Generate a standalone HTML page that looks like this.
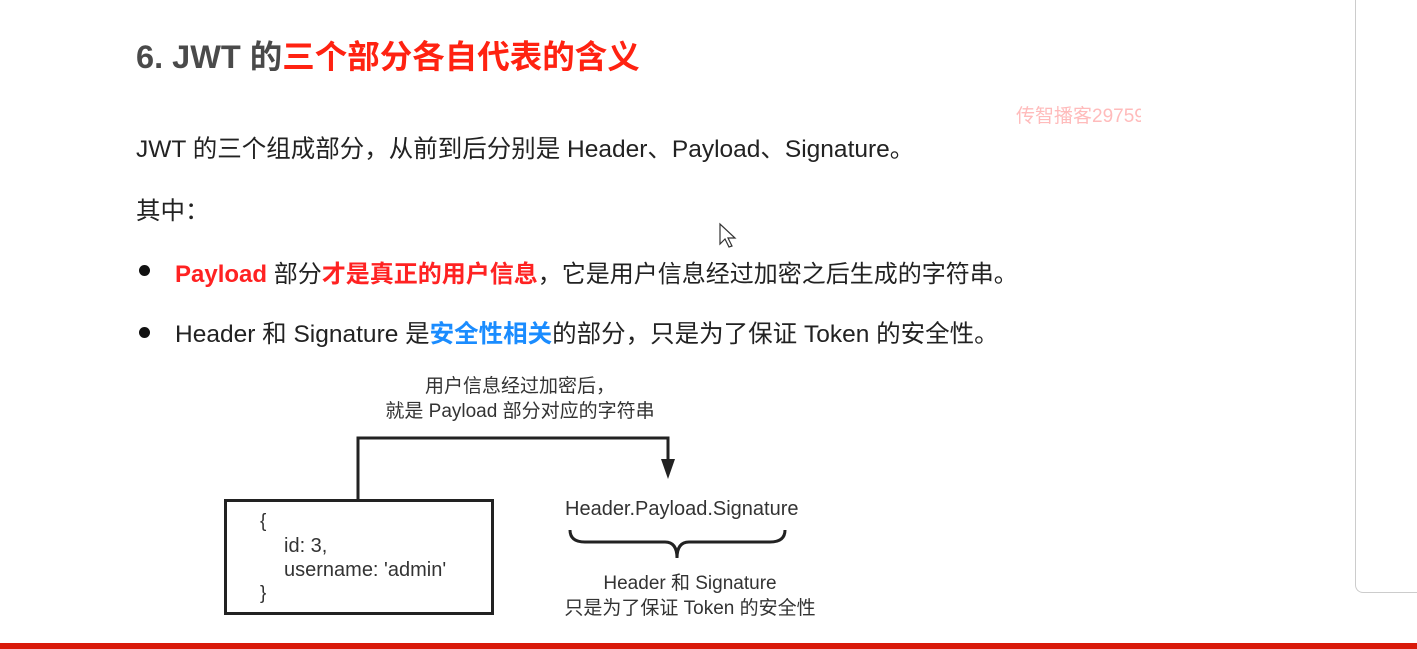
<!DOCTYPE html>
<html><head><meta charset="utf-8"><style>
body{margin:0;width:1417px;height:649px;background:#fff;position:relative;overflow:hidden;font-family:"Liberation Sans","Noto Sans CJK SC",sans-serif;}
.a{position:absolute;white-space:nowrap;}
.t{font-size:24.5px;color:#222;}
.r{color:#f22;font-weight:bold}
.b{color:#1a8cff;font-weight:bold}
.dot{position:absolute;width:11px;height:11px;border-radius:50%;background:#111;}
.d{font-size:19px;color:#333;}
</style></head><body>
<div class="a" style="left:136px;top:31px;font-size:32.5px;font-weight:bold;color:#4a4a4a;">6. JWT 的<span style="color:#f21">三个部分各自代表的含义</span></div>
<div class="a" style="left:1016px;top:101px;font-size:19px;color:#fbb;">传智播客2975<span style="display:inline-block;width:7px;overflow:hidden;vertical-align:bottom">9</span></div>
<div class="a t" style="left:136px;top:130px;">JWT 的三个组成部分，从前到后分别是 Header、Payload、Signature。</div>
<div class="a t" style="left:136px;top:192px;">其中：</div>
<div class="dot" style="left:139px;top:265px"></div>
<div class="a t" style="left:175px;top:254px;font-size:24px;"><span class="r">Payload</span> 部分<span class="r">才是真正的用户信息</span>，它是用户信息经过加密之后生成的字符串。</div>
<div class="dot" style="left:139px;top:327px"></div>
<div class="a t" style="left:175px;top:315px;">Header 和 Signature 是<span class="b">安全性相关</span>的部分，只是为了保证 Token 的安全性。</div>
<svg class="a" style="left:718px;top:222px" width="20" height="28"><path d="M2 2 L2 22 L7 17 L11 25 L14 24 L10 16 L17 16 Z" fill="#fff" stroke="#333" stroke-width="1.2"/></svg>
<div class="a" style="left:1355px;top:-5px;width:80px;height:596px;border:1.5px solid #ccc;border-right:none;border-radius:0 0 0 8px;"></div>
<div class="a d" style="left:370px;top:374px;width:300px;text-align:center;line-height:25px;">用户信息经过加密后，<br>就是 Payload 部分对应的字符串</div>
<svg class="a" style="left:0;top:0" width="1417" height="649">
<rect x="225.5" y="500.5" width="267" height="113" fill="none" stroke="#222" stroke-width="3"/>
<path d="M358 500 V438 H668 V462" fill="none" stroke="#222" stroke-width="3"/>
<path d="M661 459 H675 L668 479 Z" fill="#222"/>
<path d="M570 530 Q570 542 585 542 H665 Q677 542 677 558 Q677 542 689 542 H770 Q785 542 785 530" fill="none" stroke="#222" stroke-width="3"/>
</svg>
<div class="a d" style="left:260px;top:510px;line-height:24px;">{</div>
<div class="a d" style="left:284px;top:534px;line-height:24px;font-size:20px;">id: 3,<br>username: 'admin'</div>
<div class="a d" style="left:260px;top:582px;line-height:24px;">}</div>
<div class="a" style="left:565px;top:498px;font-size:20px;color:#333;">Header.Payload.Signature</div>
<div class="a d" style="left:530px;top:571px;width:320px;text-align:center;line-height:25px;">Header 和 Signature<br>只是为了保证 Token 的安全性</div>
<div class="a" style="left:0;top:643px;width:1417px;height:6px;background:#d91a0a;"></div>
</body></html>
